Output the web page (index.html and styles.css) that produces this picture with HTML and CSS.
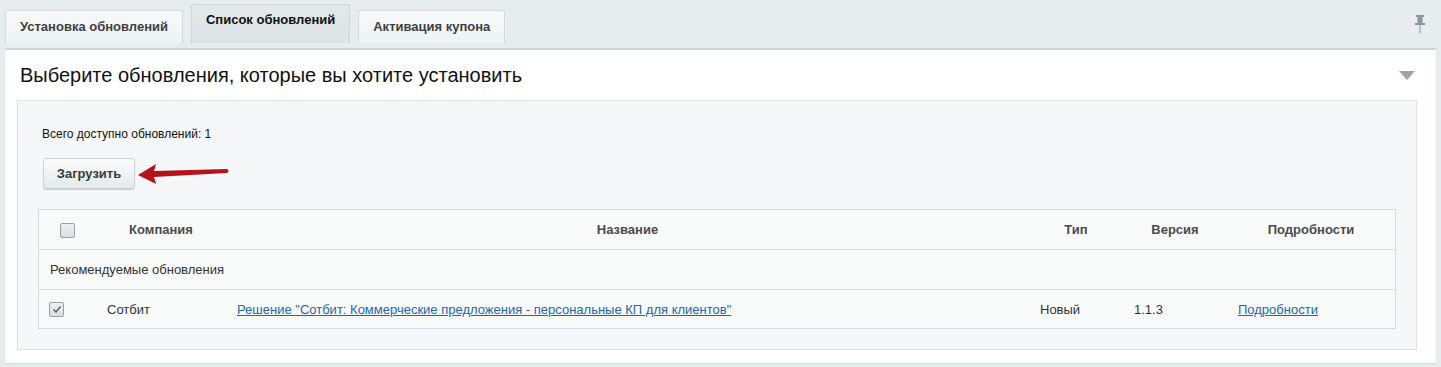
FILE: index.html
```html
<!DOCTYPE html>
<html>
<head>
<meta charset="utf-8">
<meta name="viewport" content="width=device-width, initial-scale=1">
<link rel="stylesheet" href="styles.css">
</head>
<body>

<div class="tabs">
  <div class="tab">Установка обновлений</div>
  <div class="tab active">Список обновлений</div>
  <div class="tab">Активация купона</div>
  <div class="pin">
    <svg width="10" height="18" viewBox="0 0 10 18">
      <rect x="1" y="0" width="8" height="2" fill="#8d9699"/>
      <rect x="2.5" y="2" width="5" height="6" fill="#8d9699"/>
      <rect x="0" y="8" width="10" height="2" fill="#8d9699"/>
      <rect x="4.5" y="10" width="1" height="8" fill="#8d9699"/>
    </svg>
  </div>
</div>

<div class="panel">
  <div class="panel-head">
    <h1>Выберите обновления, которые вы хотите установить</h1>
    <svg class="toggle" width="16" height="9" viewBox="0 0 16 9"><polygon points="0,0 16,0 8,9" fill="#9aa3a6"/></svg>
  </div>

  <div class="box">
    <div class="total">Всего доступно обновлений: 1</div>

    <div class="actions">
      <button type="button" class="btn">Загрузить</button>
      <svg class="arrow" width="92" height="22" viewBox="0 0 92 22">
        <path d="M0 12 L18 1 L16 8 L89 6 Q92 8 89 10 L16 14 L18 21 Z" fill="#b5121b"/>
      </svg>
    </div>

    <table class="grid">
      <thead>
        <tr>
          <th class="c-check"><span class="check"></span></th>
          <th class="c-company">Компания</th>
          <th class="c-name">Название</th>
          <th class="c-type">Тип</th>
          <th class="c-ver">Версия</th>
          <th class="c-more">Подробности</th>
        </tr>
      </thead>
      <tbody>
        <tr class="group">
          <td colspan="6">Рекомендуемые обновления</td>
        </tr>
        <tr>
          <td class="left"><span class="check checked">
            <svg width="10" height="9" viewBox="0 0 10 9"><path d="M1.5 4.5 L4 7 L8.5 1.5" stroke="#555" stroke-width="1.3" fill="none"/></svg>
          </span></td>
          <td>Сотбит</td>
          <td><a href="#">Решение "Сотбит: Коммерческие предложения - персональные КП для клиентов"</a></td>
          <td>Новый</td>
          <td>1.1.3</td>
          <td><a href="#">Подробности</a></td>
        </tr>
      </tbody>
    </table>
  </div>
</div>

</body>
</html>
```

FILE: styles.css
```css
body {
    margin: 0;
    background: #e7edef;
    font-family: "Liberation Sans", Arial, sans-serif;
    color: #333;
}

.tabs {
    display: flex;
    align-items: flex-end;
    gap: 8px;
    height: 43px;
    padding: 0 16px 0 5px;
}

.tab {
    height: 32px;
    line-height: 32px;
    padding: 0 14px;
    font-size: 13px;
    font-weight: bold;
    color: #3f3f3f;
    background: linear-gradient(#f8fafa, #eef2f3);
    border: 1px solid #d3dbde;
    border-bottom: none;
    border-radius: 3px 3px 0 0;
}

.tab.active {
    height: 38px;
    line-height: 30px;
    color: #111;
    background: linear-gradient(#e3e8ea, #dde4e6);
    border-color: #cdd5d8;
}

.pin {
    margin-left: auto;
    align-self: flex-start;
    padding-top: 15px;
}

.panel {
    margin: 5px;
    background: #fff;
    border-top: 2px solid #cfd7da;
    box-shadow: 0 1px 1px #d3dbde;
    padding: 0 19px 13px 12px;
}

.panel-head {
    display: flex;
    align-items: center;
    justify-content: space-between;
    height: 50px;
    padding-left: 3px;
}

h1 {
    margin: 0;
    font-size: 20px;
    font-weight: normal;
    color: #111;
}

.toggle {
    margin-right: 2px;
}

.box {
    background: #f5f7f8;
    border: 1px solid #dbe2e5;
    padding: 21px 20px 20px 20px;
}

.total {
    font-size: 12px;
    color: #111;
    padding: 4px 0 0 4px;
    line-height: 16px;
}

.actions {
    display: flex;
    align-items: center;
    margin: 16px 0 20px 5px;
}

.btn {
    width: 92px;
    height: 31px;
    font-family: inherit;
    font-size: 13px;
    font-weight: bold;
    color: #3a3a3a;
    background: linear-gradient(#fbfcfc, #e3e9eb);
    border: 1px solid #cdd4d7;
    border-radius: 3px;
    box-shadow: 0 1px 1px #c2cbce;
    cursor: pointer;
}

.arrow {
    margin-left: 3px;
}

.grid {
    width: 100%;
    table-layout: fixed;
    border-collapse: collapse;
    background: #f9fbfb;
    border: 1px solid #d6dde0;
    font-size: 13px;
}

.grid th {
    height: 39px;
    padding: 0;
    font-weight: bold;
    color: #4b4b4b;
    text-align: center;
    border-bottom: 1px solid #d6dde0;
}

.grid td {
    height: 39px;
    padding: 0 0 0 11px;
    color: #333;
    border-bottom: 1px solid #d6dde0;
}

.grid tr:last-child td {
    border-bottom: none;
    height: 38px;
}

.grid td.left {
    padding-left: 10px;
}

.c-check { width: 57px; }
.c-company { width: 130px; }
.c-type { width: 94px; }
.c-ver { width: 104px; }
.c-more { width: 168px; }

.grid a {
    color: #2166b0;
    text-decoration: underline;
}

.check {
    display: inline-block;
    width: 13px;
    height: 13px;
    border: 1px solid #9aa1a4;
    border-radius: 2px;
    background: linear-gradient(#eef1f2, #d8dddf);
    vertical-align: middle;
}

.check.checked {
    display: inline-flex;
    align-items: center;
    justify-content: center;
}
```
